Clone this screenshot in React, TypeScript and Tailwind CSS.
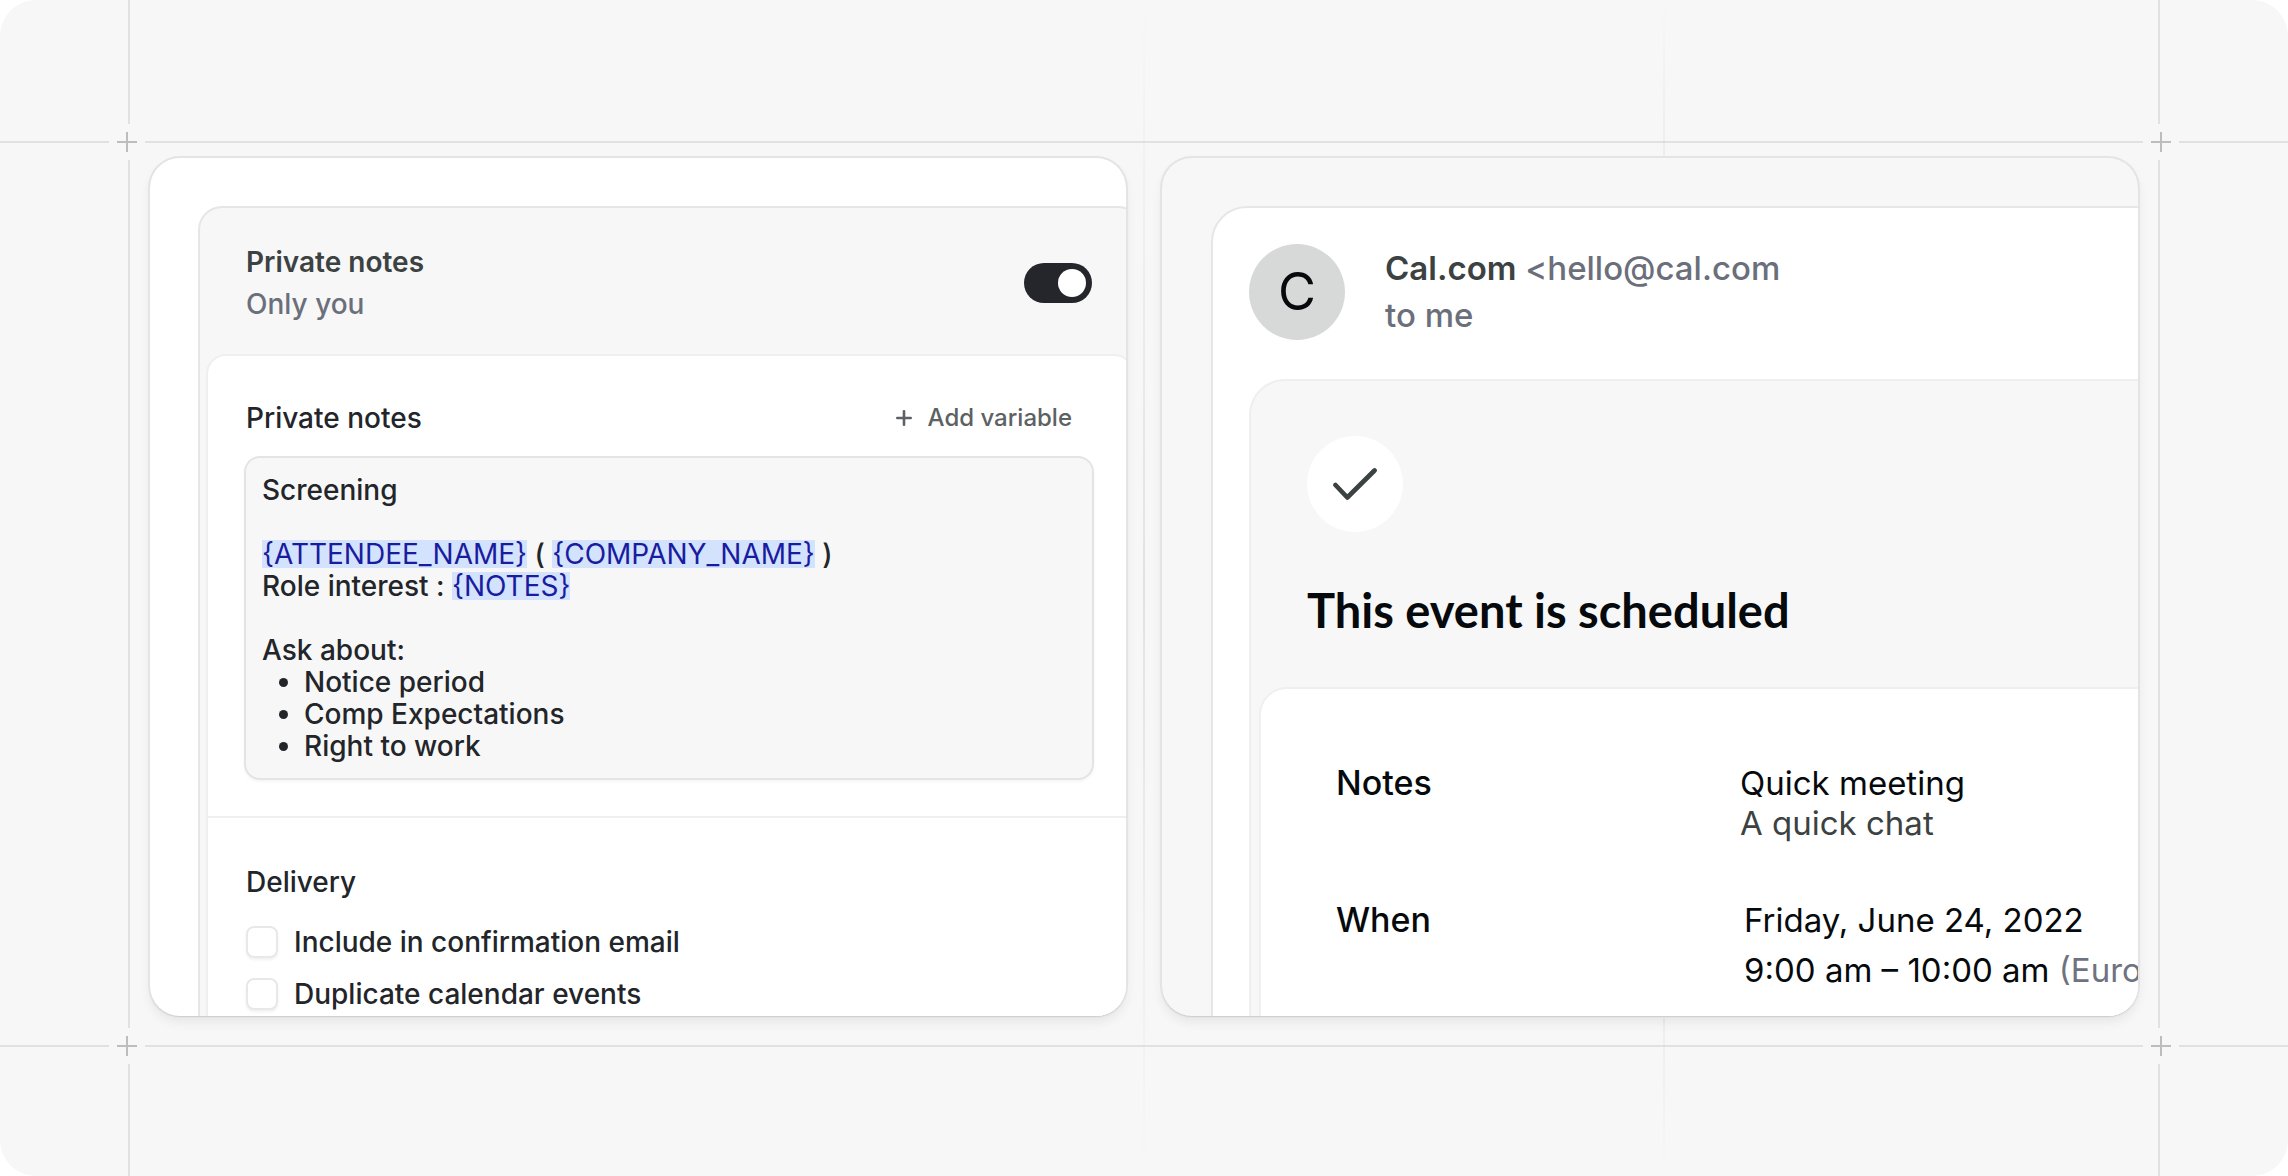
import { ReactNode } from "react";

function Cross({ className }: { className: string }) {
  return (
    <div className={`absolute flex size-9 items-center justify-center bg-[#f7f7f7] ${className}`}>
      <svg viewBox="0 0 20 20" className="size-5" stroke="#bdbdbd" strokeWidth="2" aria-hidden="true">
        <path d="M10 0v20M0 10h20" />
      </svg>
    </div>
  );
}

function Guides() {
  return (
    <div aria-hidden="true" className="pointer-events-none absolute inset-0">
      <div className="absolute inset-x-0 top-[141px] h-0.5 bg-[#e1e1e1]" />
      <div className="absolute inset-x-0 top-[1045px] h-0.5 bg-[#e1e1e1]" />
      <div className="absolute inset-y-0 left-32 w-0.5 bg-[#e1e1e1]" />
      <div className="absolute inset-y-0 right-32 w-0.5 bg-[#e1e1e1]" />
      <div className="absolute inset-y-0 left-1/2 w-0.5 -translate-x-1/2 bg-linear-to-b from-transparent via-[#e2e2e2] to-transparent" />
      <div className="absolute inset-y-0 right-[623px] w-0.5 bg-linear-to-b from-transparent via-[#d0d0d0] to-transparent" />
      <Cross className="top-31 left-[109px]" />
      <Cross className="top-31 right-[109px]" />
      <Cross className="top-[1028px] left-[109px]" />
      <Cross className="top-[1028px] right-[109px]" />
    </div>
  );
}

function Card({ className, children }: { className: string; children: ReactNode }) {
  return (
    <section
      className={`h-[858px] min-w-0 flex-1 overflow-hidden rounded-[30px] shadow-[0_1px_0_0_#d0d0d0,0_0_0_2px_#e4e4e4,0_6px_12px_rgba(0,0,0,0.07)] ${className}`}
    >
      {children}
    </section>
  );
}

function Token({ children }: { children: string }) {
  return <span className="inline-block bg-[#d3e3fd] leading-7 font-normal text-[#1a1ca0]">{children}</span>;
}

function Option({ id, label }: { id: string; label: string }) {
  return (
    <div className="flex items-center gap-4 leading-8">
      <input
        id={id}
        type="checkbox"
        className="size-8 appearance-none rounded-lg border-2 border-[#e8e8e8] bg-white shadow-[0_2px_3px_rgba(0,0,0,0.06)] checked:bg-[#25262b]"
      />
      <label htmlFor={id}>{label}</label>
    </div>
  );
}

function NotesCard() {
  return (
    <Card className="bg-white">
      <div className="mt-12 -mr-4 ml-12 rounded-t-3xl border-2 border-b-0 border-[#e6e6e6] bg-[#f7f7f7]">
        <header className="flex h-[146px] items-center justify-between pt-1 pr-12 pl-[46px]">
          <div className="leading-[42px]">
            <h2 className="font-semibold text-[#3c4242]">Private notes</h2>
            <p className="text-[#6b6f7b]">Only you</p>
          </div>
          <label className="flex">
            <input type="checkbox" role="switch" defaultChecked aria-label="Private notes" className="peer sr-only" />
            <span className="flex h-10 w-17 items-center rounded-full bg-gray-300 px-1.5 peer-checked:justify-end peer-checked:bg-[#25262b]">
              <span className="size-7 rounded-full bg-white" />
            </span>
          </label>
        </header>
        <div className="mx-1.5 h-[700px] rounded-t-[20px] border-2 border-[#efefef] bg-white text-[#222529]">
          <div className="border-b-2 border-[#efefef] pt-11 pr-[38px] pb-9 pl-9">
            <div className="mb-5 flex h-9 items-center justify-between pr-[22px] pl-0.5">
              <h3>Private notes</h3>
              <button type="button" className="flex items-center gap-4 text-2xl text-[#5c6163]">
                <svg viewBox="0 0 16 16" className="size-4" fill="none" stroke="currentColor" strokeWidth="2.6" strokeLinecap="round" aria-hidden="true">
                  <path d="M8 1.3v13.4M1.3 8h13.4" />
                </svg>
                Add variable
              </button>
            </div>
            <div
              role="textbox"
              aria-multiline="true"
              aria-label="Private notes"
              contentEditable
              suppressContentEditableWarning
              className="h-[324px] rounded-2xl border-2 border-[#e4e4e4] bg-[#f7f7f7] p-4 leading-8 shadow-[0_2px_3px_rgba(0,0,0,0.04)]"
            >
              <p className="mb-8">Screening</p>
              <p>
                <Token>{"{ATTENDEE_NAME}"}</Token> ( <Token>{"{COMPANY_NAME}"}</Token> )
              </p>
              <p className="mb-8">
                Role interest : <Token>{"{NOTES}"}</Token>
              </p>
              <p>Ask about:</p>
              <ul className="list-disc pl-[42px]">
                <li>Notice period</li>
                <li>Comp Expectations</li>
                <li>Right to work</li>
              </ul>
            </div>
          </div>
          <div className="flex flex-col gap-5 pt-[46px] pl-[38px]">
            <h3 className="mb-1.5 leading-9">Delivery</h3>
            <Option id="include-email" label="Include in confirmation email" />
            <Option id="duplicate-events" label="Duplicate calendar events" />
          </div>
        </div>
      </div>
    </Card>
  );
}

function EmailCard() {
  return (
    <Card className="bg-[#f7f7f7]">
      <div className="mt-12 -mr-12 ml-[49px] rounded-t-[36px] border-2 border-[#e6e6e6] bg-white pl-9 text-[33px]">
        <header className="flex h-[171px] items-center gap-10 pb-1">
          <div className="flex size-24 items-center justify-center rounded-full bg-[#d7d8d8] text-[52px] font-normal text-[#060a0d]">C</div>
          <div className="leading-[47px] text-[#6b6f7b]">
            <p>
              <span className="font-semibold text-[#3c4242]">Cal.com</span> &lt;hello@cal.com
            </p>
            <p>to me</p>
          </div>
        </header>
        <div className="rounded-tl-[36px] border-2 border-[#efefef] bg-[#f7f7f7] pl-2">
          <div className="h-[306px] pt-[55px] pl-12">
            <div className="flex size-24 items-center justify-center rounded-full bg-white">
              <svg viewBox="0 0 44 32" className="h-8 w-11" fill="none" stroke="#3c4242" strokeWidth="4.7" strokeLinecap="round" strokeLinejoin="round" aria-hidden="true">
                <path d="M2.5 17L14.3 29.5L41.5 2.5" />
              </svg>
            </div>
            <h2 className="mt-[46px] font-[Lato] text-[47px] leading-16 font-bold text-[#060a0d]">This event is scheduled</h2>
          </div>
          <dl className="grid h-[400px] auto-rows-min grid-cols-[404px_1fr] gap-y-13 rounded-tl-[28px] border-2 border-[#efefef] bg-white pt-[74px] pl-[75px] whitespace-nowrap text-[#060a0d]">
            <dt className="text-[34px] leading-10">Notes</dt>
            <dd className="leading-10 font-normal">
              Quick meeting
              <br />
              <span className="text-[#3c4242]">A quick chat</span>
            </dd>
            <dt className="text-[34px] leading-[50px]">When</dt>
            <dd className="pl-1 leading-[50px] font-normal">
              Friday, June 24, 2022
              <br />
              9:00 am – 10:00 am <span className="text-[#6f7280]">(Europe/London)</span>
            </dd>
          </dl>
        </div>
      </div>
    </Card>
  );
}

export default function App() {
  return (
    <main className="relative min-h-screen overflow-hidden rounded-[36px] bg-[#f7f7f7] font-[Inter,sans-serif] text-[28px] font-medium">
      <Guides />
      <div className="relative flex gap-9 px-[150px] pt-[158px]">
        <NotesCard />
        <EmailCard />
      </div>
    </main>
  );
}
